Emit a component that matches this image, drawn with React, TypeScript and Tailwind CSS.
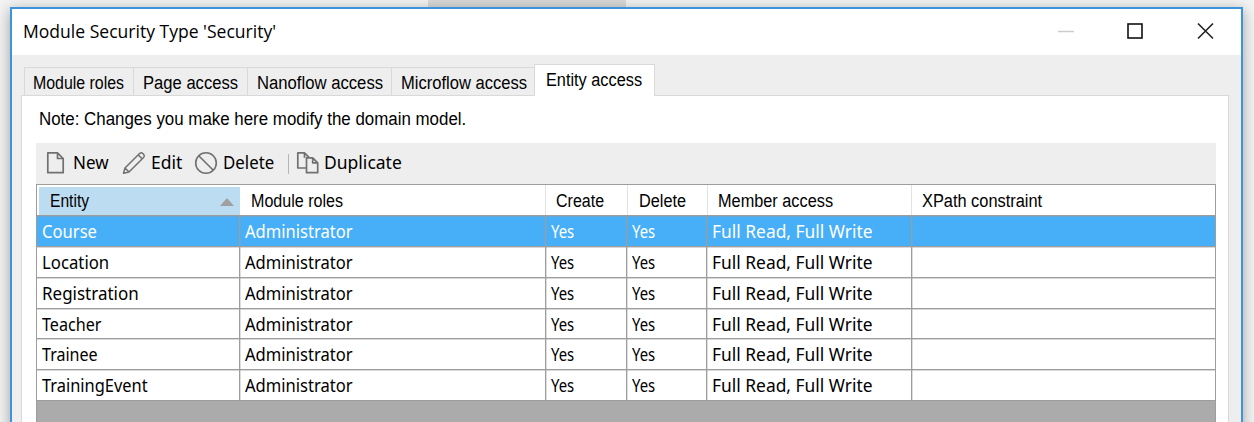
import { useLayoutEffect, useRef, useState } from "react";

type FitProps = { text: string; width: number; className?: string };

// Sets a label to an exact advance width by condensing or widening its glyphs.
function Fit({ text, width, className = "" }: FitProps) {
  const ref = useRef<HTMLSpanElement>(null);
  const [scale, setScale] = useState(1);
  useLayoutEffect(() => {
    if (ref.current) setScale(width / ref.current.offsetWidth);
  }, [width, text]);
  return (
    <span className="block shrink-0 whitespace-nowrap" style={{ width }}>
      <span
        ref={ref}
        className={`inline-block origin-left align-top ${className}`}
        style={{ transform: `scaleX(${scale})` }}
      >
        {text}
      </span>
    </span>
  );
}

const ui = "font-['Liberation_Sans',sans-serif] text-[18px] leading-[22px]";
const body = "font-['Noto_Sans',sans-serif] text-[17.5px] font-[440] leading-[22px]";

const tabs = [
  { label: "Module roles", w: 91, cls: "w-[109px] pl-[8px]" },
  { label: "Page access", w: 95, cls: "w-[114px] pl-[9px]" },
  { label: "Nanoflow access", w: 126, cls: "w-[144px] pl-[9px]" },
  { label: "Microflow access", w: 126, cls: "w-[143px] pl-[9px]" },
];

const columns = [
  { label: "Module roles", w: 92, cls: "w-[305px] pl-[11px]" },
  { label: "Create", w: 48, cls: "w-[82px] pl-[10px]" },
  { label: "Delete", w: 47, cls: "w-[80px] pl-[11px]" },
  { label: "Member access", w: 115, cls: "w-[204px] pl-[10px]" },
  { label: "XPath constraint", w: 120, cls: "flex-1 pl-[10px]" },
];

const rows = [
  { name: "Course", w: 55, h: "h-[31px]" },
  { name: "Location", w: 67, h: "h-[31px]" },
  { name: "Registration", w: 97, h: "h-[31px]" },
  { name: "Teacher", w: 60, h: "h-[30px]" },
  { name: "Trainee", w: 56, h: "h-[31px]" },
  { name: "TrainingEvent", w: 106, h: "h-[31px]" },
];

const cell = "flex h-full shrink-0 items-center border-r border-[#9d9d9d] pt-[2px] pl-[5px] shadow-[1px_0_0_#9d9d9d55]";

export default function App() {
  return (
    <div className="flex h-[422px] w-[1254px] overflow-hidden bg-[#f3f3f3] pl-[10px] pt-[7px]">
      <div className="absolute left-[428px] top-0 h-[7px] w-[198px] bg-[#d9d9d9]" />
      <div className="relative flex h-[440px] w-[1233px] shrink-0 flex-col border-2 border-[#3c94dc] bg-[#eeeeee] shadow-[0_3px_13px_rgba(0,0,0,0.35)]">
        <header className="flex h-[46px] shrink-0 items-center justify-between bg-white pb-[2px] pl-[11px] pr-[26px]">
          <Fit text="Module Security Type 'Security'" width={253} className="font-['Open_Sans',sans-serif] text-[19px] leading-[24px] text-black" />
          <svg width="158" height="18" viewBox="0 0 158 18" fill="none">
            <path d="M1 9.5h16" stroke="#cccccc" strokeWidth="1.5" />
            <rect x="71" y="2" width="14" height="14" stroke="#111" strokeWidth="1.6" />
            <path d="m141 1.5 15 15m0-15-15 15" stroke="#222" strokeWidth="1.6" />
          </svg>
        </header>

        <nav className="flex h-[40px] shrink-0 items-end pl-[12px]">
          {tabs.map((t) => (
            <div key={t.label} className={`flex h-[28px] shrink-0 items-center border-l border-t border-[#d9d9d9] pt-[4px] ${t.cls}`}>
              <Fit text={t.label} width={t.w} className={ui} />
            </div>
          ))}
          <div className="relative z-10 -mb-px flex h-[32px] w-[121px] shrink-0 items-center border border-b-0 border-[#d9d9d9] bg-white pl-[11px]">
            <Fit text="Entity access" width={96} className={ui} />
          </div>
        </nav>

        <main className="ml-[9px] flex w-[1208px] flex-1 flex-col border border-[#d9d9d9] bg-white px-[14px]">
          <div className="flex h-[47px] shrink-0 items-center pl-[3px]">
            <Fit text="Note: Changes you make here modify the domain model." width={427} className={ui} />
          </div>

          <div className="flex h-[41px] w-[1180px] shrink-0 items-center bg-[#eeeeee] pb-px pl-[10px]">
            <svg className="shrink-0" width="20" height="24" viewBox="0 0 20 24" fill="none" stroke="#707070" strokeWidth="1.7">
              <path d="M1.800 1.800h9.700l5.700 5.700v14.200H1.800zM11.500 1.800v5.700h5.700" strokeLinejoin="round" />
            </svg>
            <span className="ml-[7px]"><Fit text="New" width={36} className={body} /></span>
            <svg className="ml-[13px] shrink-0" width="24" height="24" viewBox="0 0 24 24" fill="none" stroke="#707070" strokeWidth="1.5" strokeLinejoin="round">
              <path d="M1.500 22.300 3 17 17.800 2.300q1.500-1.200 3 .2l.8.8q1.400 1.500.2 3L7 21zM3 17l4 4M16.300 4l3.800 3.800" />
            </svg>
            <span className="ml-[5px]"><Fit text="Edit" width={31} className={body} /></span>
            <svg className="ml-[12px] shrink-0" width="24" height="24" viewBox="0 0 24 24" fill="none" stroke="#707070" strokeWidth="1.600">
              <circle cx="12" cy="12" r="10.300" /><path d="m4.700 4.700 14.600 14.600" />
            </svg>
            <span className="ml-[5px]"><Fit text="Delete" width={51} className={body} /></span>
            <div className="ml-[14px] mt-px h-[20px] w-px shrink-0 bg-[#b5b5b5]" />
            <svg className="ml-[7px] shrink-0" width="24" height="24" viewBox="0 0 24 24" fill="none" stroke="#707070" strokeWidth="1.700" strokeLinejoin="round">
              <path d="M10.500 17H1.800V1.800h6.700l4.500 4.500M8.500 1.800v5M10.500 6.800h6.200l5 5v9.900H10.500zM16.700 6.800v5h5" />
            </svg>
            <span className="ml-[4px]"><Fit text="Duplicate" width={78} className={body} /></span>
          </div>

          <section className="flex w-[1180px] flex-1 flex-col border-l border-r border-t border-[#9d9d9d] bg-[#ababab]">
            <div className="flex h-[31px] shrink-0 border-b border-[#9d9d9d] bg-white">
              <div className="ml-[2px] mt-[2px] flex w-[201px] shrink-0 items-center justify-between bg-[#bcdcf2] pl-[11px] pr-[6px] pt-[2px]">
                <Fit text="Entity" width={39} className={ui} />
                <svg width="14" height="8" viewBox="0 0 14 8"><path d="m0 8 7-8 7 8z" fill="#a0a0a0" /></svg>
              </div>
              {columns.map((c, i) => (
                <div key={c.label} className={`flex shrink-0 items-center pt-[4px] ${i ? "border-l border-[#e2e2e2]" : ""} ${c.cls}`}>
                  <Fit text={c.label} width={c.w} className={ui} />
                </div>
              ))}
            </div>
            {rows.map((r, i) => (
              <div key={r.name} className={`flex shrink-0 items-center border-b border-[#9d9d9d] shadow-[inset_0_1px_0_#9d9d9d66] ${r.h} ${i === 0 ? "bg-[#47aef8] text-white" : "bg-white text-black"}`}>
                <div className={`${cell} w-[203px]`}><Fit text={r.name} width={r.w} className={body} /></div>
                <div className={`${cell} w-[306px]`}><Fit text="Administrator" width={108} className={body} /></div>
                <div className={`${cell} w-[81px]`}><Fit text="Yes" width={23} className={body} /></div>
                <div className={`${cell} w-[80px]`}><Fit text="Yes" width={23} className={body} /></div>
                <div className={`${cell} w-[205px]`}><Fit text="Full Read, Full Write" width={161} className={body} /></div>
              </div>
            ))}
          </section>
        </main>
      </div>
    </div>
  );
}
